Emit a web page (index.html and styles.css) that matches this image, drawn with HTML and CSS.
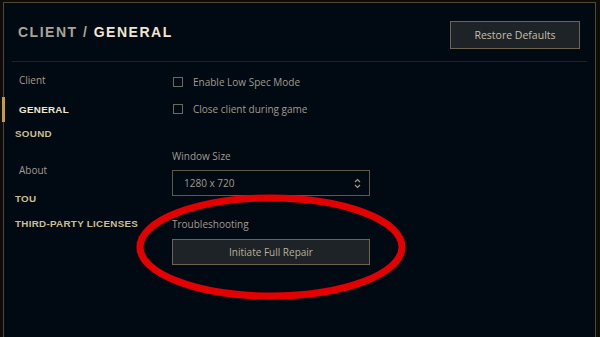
FILE: index.html
```html
<!DOCTYPE html>
<html>
<head>
<meta charset="utf-8">
<link rel="stylesheet" href="styles.css">
</head>
<body>
<div class="frame">
  <header class="header">
    <h1 class="title"><span class="crumb">CLIENT /</span> <span class="current">GENERAL</span></h1>
    <button class="btn restore">Restore Defaults</button>
  </header>
  <div class="divider"></div>
  <div class="main">
    <nav class="nav">
      <div class="nav-item sub i-client">Client</div>
      <div class="nav-item sub active i-general">GENERAL</div>
      <div class="nav-item head i-sound">SOUND</div>
      <div class="nav-item sub i-about">About</div>
      <div class="nav-item head i-tou">TOU</div>
      <div class="nav-item head i-third">THIRD-PARTY LICENSES</div>
    </nav>
    <section class="content">
      <label class="check r1"><span class="box"></span>Enable Low Spec Mode</label>
      <label class="check r2"><span class="box"></span>Close client during game</label>
      <div class="label l-window">Window Size</div>
      <div class="select">
        <span>1280 x 720</span>
        <svg class="arrows" width="7" height="11" viewBox="0 0 7 11"><path d="M1 4 L3.5 1.5 L6 4" fill="none" stroke="#a09b8c" stroke-width="1.2"/><path d="M1 7 L3.5 9.5 L6 7" fill="none" stroke="#a09b8c" stroke-width="1.2"/></svg>
      </div>
      <div class="label l-trouble">Troubleshooting</div>
      <button class="btn repair">Initiate Full Repair</button>
    </section>
  </div>
  <svg class="annot" width="600" height="337" viewBox="0 0 600 337"><ellipse cx="271" cy="247" rx="131" ry="49" fill="none" stroke="#e30000" stroke-width="7"/></svg>
</div>
</body>
</html>
```
FILE: styles.css
```css
html, body { margin: 0; padding: 0; }
body {
  width: 600px;
  height: 337px;
  background: #0d0c08;
  overflow: hidden;
  font-family: "Open Sans", "Noto Sans", sans-serif;
  color: #a09b8c;
  padding: 2px 4px 0 3px;
  box-sizing: border-box;
}
.frame {
  height: 340px;
  border: 1px solid #4f4a36;
  border-bottom: none;
  background: #010a13;
  box-sizing: border-box;
}
.header {
  display: flex;
  justify-content: space-between;
  align-items: flex-start;
  height: 58px;
  padding: 0 15px 0 14px;
}
.title {
  margin: 21px 0 0 0;
  font-family: "Liberation Sans", Arial, sans-serif;
  font-weight: bold;
  font-size: 14px;
  letter-spacing: 1.5px;
  line-height: 16px;
}
.crumb { color: #a8a596; }
.current { color: #f0e6d2; }
.btn {
  font-family: "Open Sans", "Noto Sans", sans-serif;
  background: #1e2328;
  border: 1px solid #6e6550;
  color: #c8bfa5;
  font-size: 10.5px;
  padding: 0;
  cursor: pointer;
}
.restore {
  margin-top: 18px;
  width: 130px;
  height: 28px;
}
.divider {
  height: 1px;
  background: #1e2328;
  margin: 0 8px;
}
.main { display: flex; }
.nav {
  width: 168px;
  display: flex;
  flex-direction: column;
}
.nav-item {
  line-height: 16px;
  height: 16px;
  font-size: 10px;
}
.sub { padding-left: 15px; color: #a09b8c; }
.head {
  padding-left: 11px;
  font-family: "Liberation Sans", Arial, sans-serif;
  font-weight: bold;
  font-size: 9.8px;
  letter-spacing: 0.3px;
  color: #cdbe91;
}
.active {
  position: relative;
  font-family: "Liberation Sans", Arial, sans-serif;
  font-weight: bold;
  font-size: 9.8px;
  letter-spacing: 0.3px;
  color: #f0e6d2;
  height: 25px;
  line-height: 25px;
}
.active::before {
  content: "";
  position: absolute;
  left: -2px;
  top: 0;
  width: 3px;
  height: 25px;
  background: #c89b3c;
}
.i-client { margin-top: 10px; }
.i-general { margin-top: 9px; }
.i-sound { margin-top: 4px; }
.i-about { margin-top: 20px; }
.i-tou { margin-top: 13px; }
.i-third { margin-top: 9px; }
.content {
  display: flex;
  flex-direction: column;
  width: 198px;
}
.check {
  display: flex;
  align-items: center;
  height: 16px;
  font-size: 10px;
  color: #a09b8c;
}
.box {
  width: 8px;
  height: 8px;
  border: 1px solid #6a6960;
  margin: 0 10px 0 1px;
}
.r1 { margin-top: 12px; }
.r2 { margin-top: 11px; }
.label { font-size: 10px; line-height: 16px; height: 16px; }
.l-window { margin-top: 31px; }
.select {
  margin-top: 6px;
  height: 26px;
  box-sizing: border-box;
  border: 1px solid #5f5a48;
  background: #010a13;
  display: flex;
  align-items: center;
  justify-content: space-between;
  padding: 0 8px 0 11px;
  font-size: 10px;
  color: #a09b8c;
}
.l-trouble { margin-top: 20px; }
.repair {
  margin-top: 7px;
  height: 26px;
  width: 198px;
  font-size: 10px;
  color: #b8b09a;
}
.annot {
  position: absolute;
  left: 0;
  top: 0;
  pointer-events: none;
}
```
